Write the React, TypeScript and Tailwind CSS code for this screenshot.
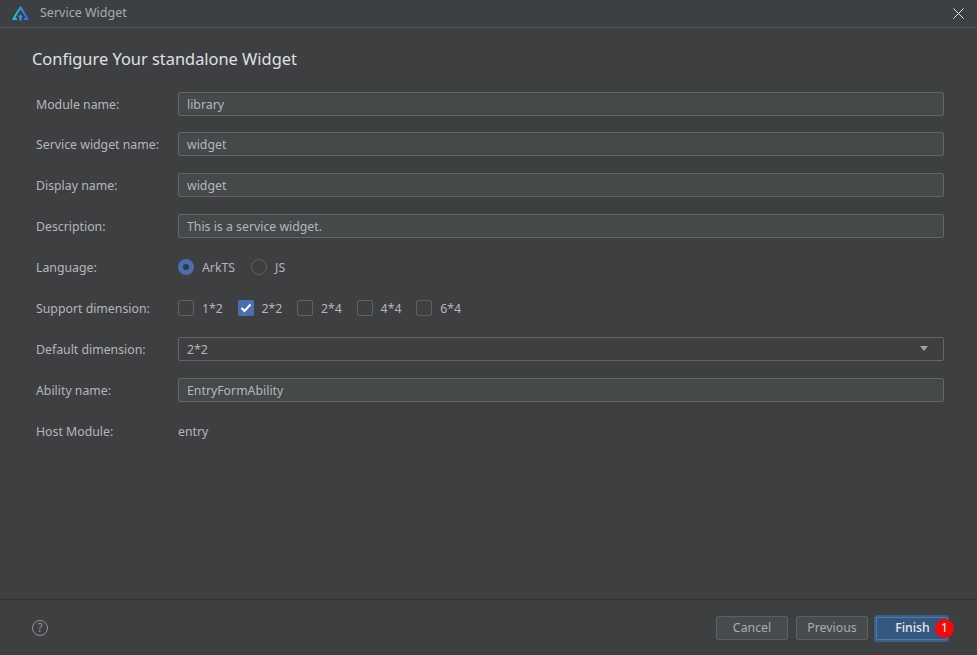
const font = "font-['Noto_Sans','Open_Sans',sans-serif]";

function Logo() {
  return (
    <svg width="17" height="15" viewBox="0 0 17 15" fill="none">
      <defs>
        <linearGradient id="logo" x1="0" y1="0" x2="1" y2="0">
          <stop offset="0" stopColor="#20c4dc" />
          <stop offset="1" stopColor="#2a6be0" />
        </linearGradient>
      </defs>
      <path d="M5 13 H1.4 L8.5 1.4 L15.6 13 H12" stroke="url(#logo)" strokeWidth="2.1" strokeLinejoin="round" />
      <path d="M8.5 8.2 L10.8 11 H9.6 V14.5 H7.4 V11 H6.2 Z" fill="#2e9ae8" />
    </svg>
  );
}

function Row({ label, children }: { label: string; children: React.ReactNode }) {
  return (
    <div className="flex h-[41px] items-center first:h-[40px] first:pt-px">
      <div className="w-[142px] shrink-0 pt-1 text-[12.3px] text-[#b4b7b9]">{label}</div>
      <div className="flex-1">{children}</div>
    </div>
  );
}

function Field({ value }: { value: string }) {
  return (
    <div className="flex h-6 items-center rounded-[2px] border border-[#646464] bg-[#45494a] px-2 pt-1 text-[12.3px] text-[#b4b7b9]">
      {value}
    </div>
  );
}

function Check({ label, on }: { label: string; on?: boolean }) {
  return (
    <div className="flex items-center">
      <div className={on ? "flex h-4 w-4 items-center justify-center rounded-[2px] bg-[#4a6fb0]" : "h-4 w-4 rounded-[2px] border border-[#5f6061]"}>
        {on && (
          <svg width="12" height="10" viewBox="0 0 12 10" fill="none">
            <path d="M1.5 5 L4.5 8 L10.5 1.5" stroke="white" strokeWidth="2" />
          </svg>
        )}
      </div>
      <span className="ml-2 pt-1 text-[12.3px] text-[#b4b7b9]">{label}</span>
    </div>
  );
}

function Button({ label, primary }: { label: string; primary?: boolean }) {
  if (primary) {
    return (
      <div className="flex h-[27px] w-[75px] items-center justify-center rounded-[3px] border-2 border-[#3a5f8c] bg-[#365880] pt-px pl-[2px] text-[12.3px] font-medium text-[#e4e7ea] shadow-[inset_0_0_0_1px_#4a7ba8]">
        {label}
      </div>
    );
  }
  return (
    <div className="flex h-6 w-[72px] items-center justify-center rounded-[2px] border border-[#5e6060] bg-[#484b4d] pt-px text-[12.3px] text-[#a9acae]">
      {label}
    </div>
  );
}

export default function App() {
  return (
    <div className={`${font} flex h-[655px] w-[977px] flex-col overflow-hidden bg-[#3e3f41]`}>
      {/* title bar */}
      <div className="flex h-7 shrink-0 items-center border-b border-[#555759] bg-[#3c4043] pl-3 pr-[13px]">
        <Logo />
        <span className="ml-[11px] text-[12.5px] text-[#a8abad]">Service Widget</span>
        <svg className="ml-auto" width="11" height="11" viewBox="0 0 11 11">
          <path d="M0.5 0.5 L10.5 10.5 M10.5 0.5 L0.5 10.5" stroke="#e8e8e8" strokeWidth="1" />
        </svg>
      </div>

      <div className="flex-1 pl-8 pr-[33px]">
        <h1 className="mt-[18px] h-[26px] text-[16.4px] leading-[26px] font-normal text-[#dfe1e2]">Configure Your standalone Widget</h1>
        <div className="mt-[11px] pl-1">
          <Row label="Module name:"><Field value="library" /></Row>
          <Row label="Service widget name:"><Field value="widget" /></Row>
          <Row label="Display name:"><Field value="widget" /></Row>
          <Row label="Description:"><Field value="This is a service widget." /></Row>
          <Row label="Language:">
            <div className="flex items-center">
              <div className="flex h-4 w-4 items-center justify-center rounded-full bg-[#4a6fb0]">
                <div className="h-[6px] w-[6px] rounded-full bg-[#2f3a4a]" />
              </div>
              <span className="ml-2 pt-1 text-[12.3px] text-[#b4b7b9]">ArkTS</span>
              <div className="ml-4 h-4 w-4 rounded-full border border-[#5f6061]" />
              <span className="ml-2 pt-1 text-[12.3px] text-[#b4b7b9]">JS</span>
            </div>
          </Row>
          <Row label="Support dimension:">
            <div className="flex items-center gap-[14.7px]">
              <Check label="1*2" />
              <Check label="2*2" on />
              <Check label="2*4" />
              <Check label="4*4" />
              <Check label="6*4" />
            </div>
          </Row>
          <Row label="Default dimension:">
            <div className="flex h-6 items-center justify-between rounded-[2px] border border-[#646464] bg-[#3e3f41] pl-2 pr-[15px] text-[12.3px] text-[#b4b7b9]">
              <span className="pt-1">2*2</span>
              <svg width="8" height="5" viewBox="0 0 8 5">
                <path d="M0 0 H8 L4 5 Z" fill="#a0a2a4" />
              </svg>
            </div>
          </Row>
          <Row label="Ability name:"><Field value="EntryFormAbility" /></Row>
          <Row label="Host Module:">
            <span className="block pt-1 text-[12.3px] text-[#b4b7b9]">entry</span>
          </Row>
        </div>
      </div>

      {/* footer */}
      <div className="flex h-[56px] shrink-0 items-center border-t border-[#323232] pl-8 pr-[27px]">
        <svg className="mt-px" width="16" height="16" viewBox="0 0 16 16" fill="none">
          <circle cx="8" cy="8" r="7.5" stroke="#919395" />
          <text x="8" y="12.2" textAnchor="middle" fontSize="12" fill="#919395">?</text>
        </svg>
        <div className="ml-auto mt-px flex items-center gap-2">
          <Button label="Cancel" />
          <Button label="Previous" />
          <div className="relative -ml-[2px] mr-px">
            <Button label="Finish" primary />
            <div className="absolute top-[4px] -right-[5px] flex h-[19px] w-[19px] items-center justify-center rounded-full bg-[#f00a0a] text-[12px] text-white">1</div>
          </div>
        </div>
      </div>
    </div>
  );
}
